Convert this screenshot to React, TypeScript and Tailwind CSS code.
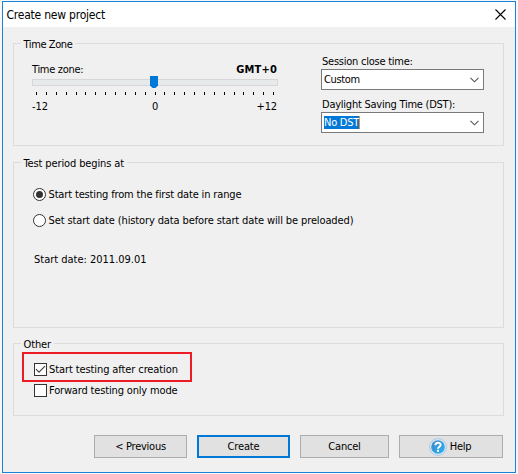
import React, { useState } from 'react';

interface GroupBoxProps {
  title: string;
  className: string;
  titleClassName?: string;
  children: React.ReactNode;
}

const GroupBox: React.FC<GroupBoxProps> = ({ title, className, titleClassName = '', children }) => (
  <section className={`border border-[#dcdcdc] ${className}`}>
    <h2 className={`-mt-2 ml-[7px] h-4 w-fit bg-[#f0f0f0] pr-[3px] pl-[2.5px] leading-[17px] ${titleClassName}`}>{title}</h2>
    {children}
  </section>
);

interface SelectBoxProps {
  label: string;
  children: React.ReactNode;
}

const SelectBox: React.FC<SelectBoxProps> = ({ label, children }) => (
  <div className="w-[163px]">
    <div className="ml-px h-4 leading-[17px] tracking-[-.24px]">{label}</div>
    <button className="flex h-[21px] w-full items-center justify-between border border-[#7a7a7a] bg-white pr-1 pl-0.5">
      {children}
      <svg width="9" height="6" viewBox="0 0 9 6" fill="none" stroke="#555" strokeWidth="1.1">
        <path d="M.5 .8 4.5 4.8 8.5 .8" />
      </svg>
    </button>
  </div>
);

interface OptionProps {
  label: string;
  className?: string;
  checked: boolean;
  onChange: () => void;
}

const Radio: React.FC<OptionProps> = ({ label, className = '', checked, onChange }) => (
  <button role="radio" aria-checked={checked} onClick={onChange} className="flex h-[13px] items-center">
    <span className="flex size-[13px] items-center justify-center rounded-full border border-[#333] bg-white">
      {checked && <span className="size-[7px] rounded-full bg-[#333]" />}
    </span>
    <span className={`ml-[2.5px] pt-0.5 ${className}`}>{label}</span>
  </button>
);

const CheckBox: React.FC<OptionProps> = ({ label, className = '', checked, onChange }) => (
  <button role="checkbox" aria-checked={checked} onClick={onChange} className="flex h-[13px] items-center">
    <span className="flex size-[13px] items-center justify-center border border-[#333] bg-white">
      {checked && (
        <svg width="11" height="11" viewBox="0 0 11 11" fill="none" stroke="#444" strokeWidth="1.2">
          <path d="M1 5.2 4 8.2 10 2.2" />
        </svg>
      )}
    </span>
    <span className={`ml-0.5 pt-0.5 ${className}`}>{label}</span>
  </button>
);

const TICKS = Array.from({ length: 25 }, (_, i) => i);

const ZoneSlider: React.FC = () => (
  <div className="w-[246px]">
    <div className="flex h-4 justify-between leading-4">
      <span className="tracking-[-.3px]">Time zone:</span>
      <span className="pr-px font-bold tracking-[.15px]">GMT+0</span>
    </div>
    <div className="relative mt-px h-[7px] border border-[#d6d6d6] bg-[#e7eaea]">
      <svg className="absolute -top-1 left-[117px]" width="8" height="13" viewBox="0 0 8 13">
        <path d="M0 0H8V9.5L5.5 12H2.5L0 9.5Z" fill="#0078d7" />
      </svg>
    </div>
    <div className="mt-[6px] flex justify-between pr-1 pl-1">
      {TICKS.map((tick) => (
        <span key={tick} className="h-[3px] w-px bg-black" />
      ))}
    </div>
    <div className="mt-[4px] flex h-4 justify-between leading-4">
      <span className="w-8">-12</span>
      <span>0</span>
      <span className="w-8 pr-px text-right">+12</span>
    </div>
  </div>
);

const HelpIcon: React.FC = () => (
  <svg width="18" height="18" viewBox="0 0 18 18">
    <defs>
      <linearGradient id="help-fill" x1="0" y1="0" x2="1" y2="1">
        <stop offset="0" stopColor="#3d85c6" />
        <stop offset="1" stopColor="#2cb3f2" />
      </linearGradient>
    </defs>
    <circle cx="9" cy="9" r="8.4" fill="#dbe9f5" stroke="#a3c4e2" strokeWidth=".9" />
    <circle cx="9" cy="9" r="6.8" fill="url(#help-fill)" />
    <path d="M6.4 7.2C6.4 4 11.6 4 11.6 6.9 11.6 8.7 9 8.7 9 10.8" fill="none" stroke="#fff" strokeWidth="2" />
    <rect x="8" y="11.8" width="2" height="2" fill="#fff" />
  </svg>
);

const App: React.FC = () => {
  const [startMode, setStartMode] = useState('first');
  const [startAfter, setStartAfter] = useState(true);
  const [forwardOnly, setForwardOnly] = useState(false);

  return (
    <div className="h-[474px] w-[518px] bg-[#f7f7f7] pt-px pl-[2px] font-['DejaVu_Sans_Condensed',sans-serif] text-[11px] tracking-[-.12px] whitespace-nowrap text-black">
      <div className="h-[472px] w-[514px] border border-[#1883d7] bg-[#f0f0f0]">
        <header className="flex h-[25px] items-center justify-between bg-white pr-[9px] pl-[3.5px]">
          <h1 className="text-[12px] tracking-[-.22px]">Create new project</h1>
          <svg width="11" height="11" viewBox="0 0 11 11" stroke="#000" strokeWidth="1.1">
            <path d="M.5 .5 10.5 10.5M10.5 .5 .5 10.5" />
          </svg>
        </header>

        <main className="px-[10px] pt-4">
          <GroupBox title="Time Zone" className="h-[103px] w-[491px]" titleClassName="tracking-[-.4px]">
            <div className="flex pl-[18px]">
              <div className="pt-[10px]">
                <ZoneSlider />
              </div>
              <div className="ml-[43px] flex flex-col gap-[6px] pt-[1px]">
                <SelectBox label="Session close time:">
                  <span className="pt-0.5 tracking-[-.35px]">Custom</span>
                </SelectBox>
                <SelectBox label="Daylight Saving Time (DST):">
                  <span className="h-[13px] border-r border-[#ff8728] bg-[#0078d7] leading-[14px] tracking-[-.25px] text-white">
                    No DST
                  </span>
                </SelectBox>
              </div>
            </div>
          </GroupBox>

          <GroupBox title="Test period begins at" className="mt-4 h-[166px] w-[491px]">
            <div role="radiogroup" className="flex flex-col gap-[13px] pt-[17px] pl-[19px]">
              <Radio
                label="Start testing from the first date in range"
                className="tracking-[-.15px]"
                checked={startMode === 'first'}
                onChange={() => setStartMode('first')}
              />
              <Radio
                label="Set start date (history data before start date will be preloaded)"
                checked={startMode === 'custom'}
                onChange={() => setStartMode('custom')}
              />
            </div>
            <p className="mt-6 pl-5 leading-[18px] tracking-[-.01px]">Start date: 2011.09.01</p>
          </GroupBox>

          <GroupBox title="Other" className="mt-[15px] h-[73px] w-[491px]">
            <div className="ml-2 flex h-[30px] w-[170px] items-center border-2 border-[#ed1c24] pt-1 pl-[10px]">
              <CheckBox
                label="Start testing after creation"
                className="tracking-[-.1px]"
                checked={startAfter}
                onChange={() => setStartAfter(!startAfter)}
              />
            </div>
            <div className="pt-[2px] pl-5">
              <CheckBox
                label="Forward testing only mode"
                className="tracking-[-.16px]"
                checked={forwardOnly}
                onChange={() => setForwardOnly(!forwardOnly)}
              />
            </div>
          </GroupBox>
        </main>

        <footer className="mt-[19px] flex gap-[10px] pl-[91px]">
          <button className="h-[23px] w-[93px] border border-[#adadad] bg-[#e1e1e1] pt-0.5 tracking-[-.25px]">&lt; Previous</button>
          <button className="h-[23px] w-[93px] border-2 border-[#0078d7] bg-[#e1e1e1] pt-0.5">Create</button>
          <button className="h-[23px] w-[89px] border border-[#adadad] bg-[#e1e1e1] pt-0.5 tracking-[-.2px]">Cancel</button>
          <button className="flex h-[23px] w-[104px] items-center justify-center gap-[3px] border border-[#adadad] bg-[#e1e1e1] pr-0.5 tracking-[-.25px]">
            <HelpIcon />
            <span className="pt-px">Help</span>
          </button>
        </footer>
      </div>
    </div>
  );
};

export default App;
